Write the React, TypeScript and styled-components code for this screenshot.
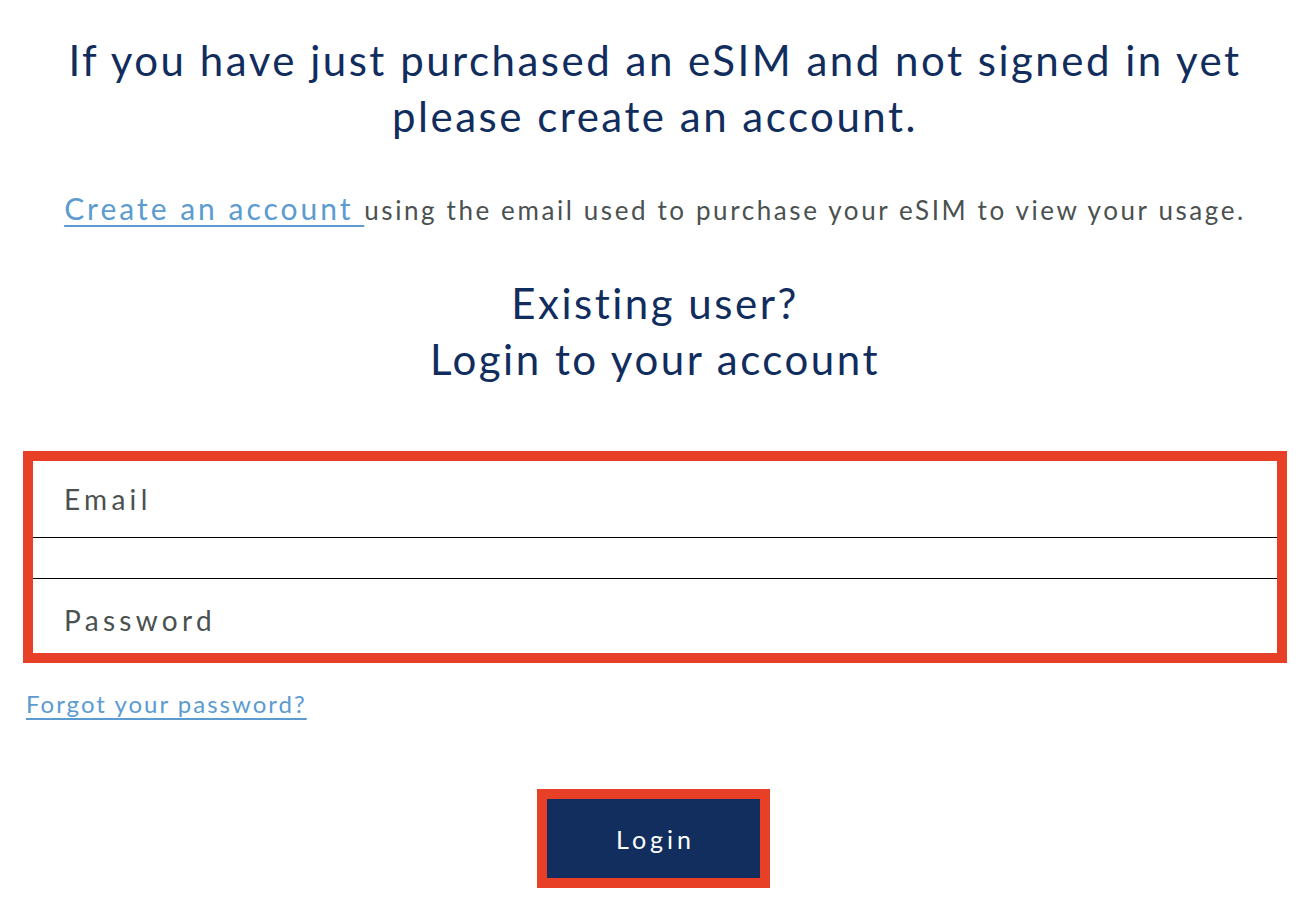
import React from "react";
import styled, {createGlobalStyle} from "styled-components";

const GlobalStyle = createGlobalStyle`
  html, body {
    margin: 0;
    padding: 0;
    background: #ffffff;
  }
  body {
    font-family: Lato, "Noto Sans", sans-serif;
  }
`;

const Page = styled.div`
  width: 1308px;
  min-height: 898px;
  box-sizing: border-box;
  padding: 32px 21px 0 23px;
  display: flex;
  flex-direction: column;
`;

const Heading = styled.h1`
  margin: 0;
  text-align: center;
  font-size: 42px;
  font-weight: 400;
  line-height: 56px;
  letter-spacing: 2.5px;
  color: #112d5e;
`;

const Intro = styled.p`
  margin: 48px 0 0;
  text-align: center;
  font-size: 26px;
  line-height: 36px;
  letter-spacing: 2.6px;
  color: #4a5150;
`;

const TextLink = styled.a<{$size: number; $spacing: number}>`
  color: #5b9bd1;
  text-decoration: underline;
  text-underline-offset: 5px;
  text-decoration-thickness: 2px;
  font-size: ${(p) => p.$size}px;
  letter-spacing: ${(p) => p.$spacing}px;
  line-height: 30px;
  cursor: pointer;
`;

const SubHeading = styled(Heading)`
  margin-top: 47px;
`;

const FieldBox = styled.div`
  margin-top: 64px;
  border: 10px solid #e83f27;
  display: flex;
  flex-direction: column;
`;

const Field = styled.input<{$height: number; $offset?: number}>`
  border: none;
  outline: none;
  height: ${(p) => p.$height}px;
  box-sizing: border-box;
  padding: ${(p) => p.$offset ?? 0}px 0 0 31px;
  font-family: Lato, "Noto Sans", sans-serif;
  font-size: 28px;
  letter-spacing: 4.3px;
  color: #4a5150;
  background: transparent;

  &::placeholder {
    color: #4a5150;
  }
`;

const Divider = styled.div`
  height: 40px;
  border-top: 1px solid #000;
  border-bottom: 1px solid #000;
`;

const Forgot = styled.div`
  margin-top: 26px;
  margin-left: 3px;
  line-height: 30px;
`;

const ButtonFrame = styled.div`
  align-self: center;
  margin-top: 67px;
  margin-right: 3px;
  border: 10px solid #e83f27;
`;

const LoginButton = styled.button`
  display: block;
  width: 213px;
  height: 79px;
  padding: 0 0 0 4px;
  border: none;
  background: #112e5e;
  color: #ffffff;
  font-family: Lato, "Noto Sans", sans-serif;
  font-size: 25px;
  letter-spacing: 4px;
  cursor: pointer;
`;

export default function App() {
    return (
        <>
            <GlobalStyle/>
            <Page>
                <Heading>
                    If you have just purchased an eSIM and not signed in yet
                    <br/>
                    please create an account.
                </Heading>
                <Intro>
                    <TextLink $size={30} $spacing={3}>Create an account </TextLink>
                    using the email used to purchase your eSIM to view your usage.
                </Intro>
                <SubHeading>
                    Existing user?
                    <br/>
                    Login to your account
                </SubHeading>
                <FieldBox>
                    <Field $height={76} type="email" placeholder="Email"/>
                    <Divider/>
                    <Field $height={74} $offset={8} type="password" placeholder="Password"/>
                </FieldBox>
                <Forgot>
                    <TextLink $size={24} $spacing={2}>Forgot your password?</TextLink>
                </Forgot>
                <ButtonFrame>
                    <LoginButton>Login</LoginButton>
                </ButtonFrame>
            </Page>
        </>
    );
}
